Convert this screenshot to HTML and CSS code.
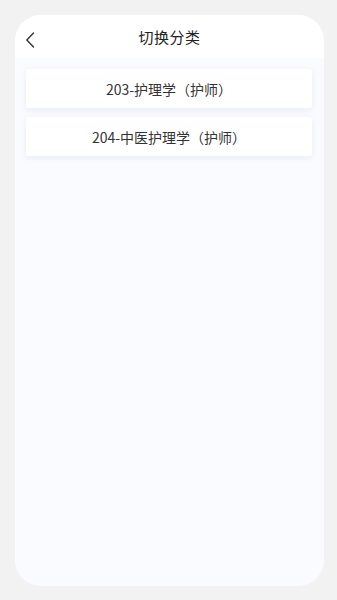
FILE: index.html
```html
<!DOCTYPE html>
<html lang="zh-CN">
<head>
    <meta charset="UTF-8">
    <meta name="viewport" content="width=device-width, initial-scale=1.0">
    <title>切换分类</title>
    <link rel="stylesheet" href="styles.css">
</head>
<body>
    <div class="panel">
        <div class="header">
            <span class="back">
                <svg width="10" height="16" viewBox="0 0 10 16"><path d="M8.5 1 L1.8 8 L8.5 15" fill="none" stroke="#333" stroke-width="1.4" stroke-linecap="round" stroke-linejoin="round"/></svg>
            </span>
            <h1>切换分类</h1>
        </div>

        <div class="list">
            <div class="item">203-护理学（护师）</div>
            <div class="item">204-中医护理学（护师）</div>
        </div>
    </div>
</body>
</html>
```

FILE: styles.css
```css
* {
    margin: 0;
    padding: 0;
    box-sizing: border-box;
    font-family: "Noto Sans CJK SC", "Noto Sans", sans-serif;
}

body {
    background: #f2f2f2;
    height: 600px;
    padding: 15px 13px 14px 15px;
}

.panel {
    height: 100%;
    background: #fafbfe;
    border-radius: 26px;
    overflow: hidden;
    display: flex;
    flex-direction: column;
}

.header {
    height: 43px;
    background: white;
    display: flex;
    align-items: center;
    justify-content: center;
    position: relative;
}

.back {
    position: absolute;
    left: 10px;
    top: 17px;
    display: flex;
}

.header h1 {
    font-size: 15px;
    font-weight: 400;
    color: #222;
    letter-spacing: 0.5px;
}

.list {
    padding: 11px 12px 0 11px;
    display: flex;
    flex-direction: column;
    gap: 9px;
}

.item {
    height: 39px;
    background: white;
    border-radius: 3px;
    box-shadow: 0 2px 6px rgba(200, 210, 235, 0.35);
    display: flex;
    align-items: center;
    justify-content: center;
    font-size: 14px;
    color: #333;
}
```
